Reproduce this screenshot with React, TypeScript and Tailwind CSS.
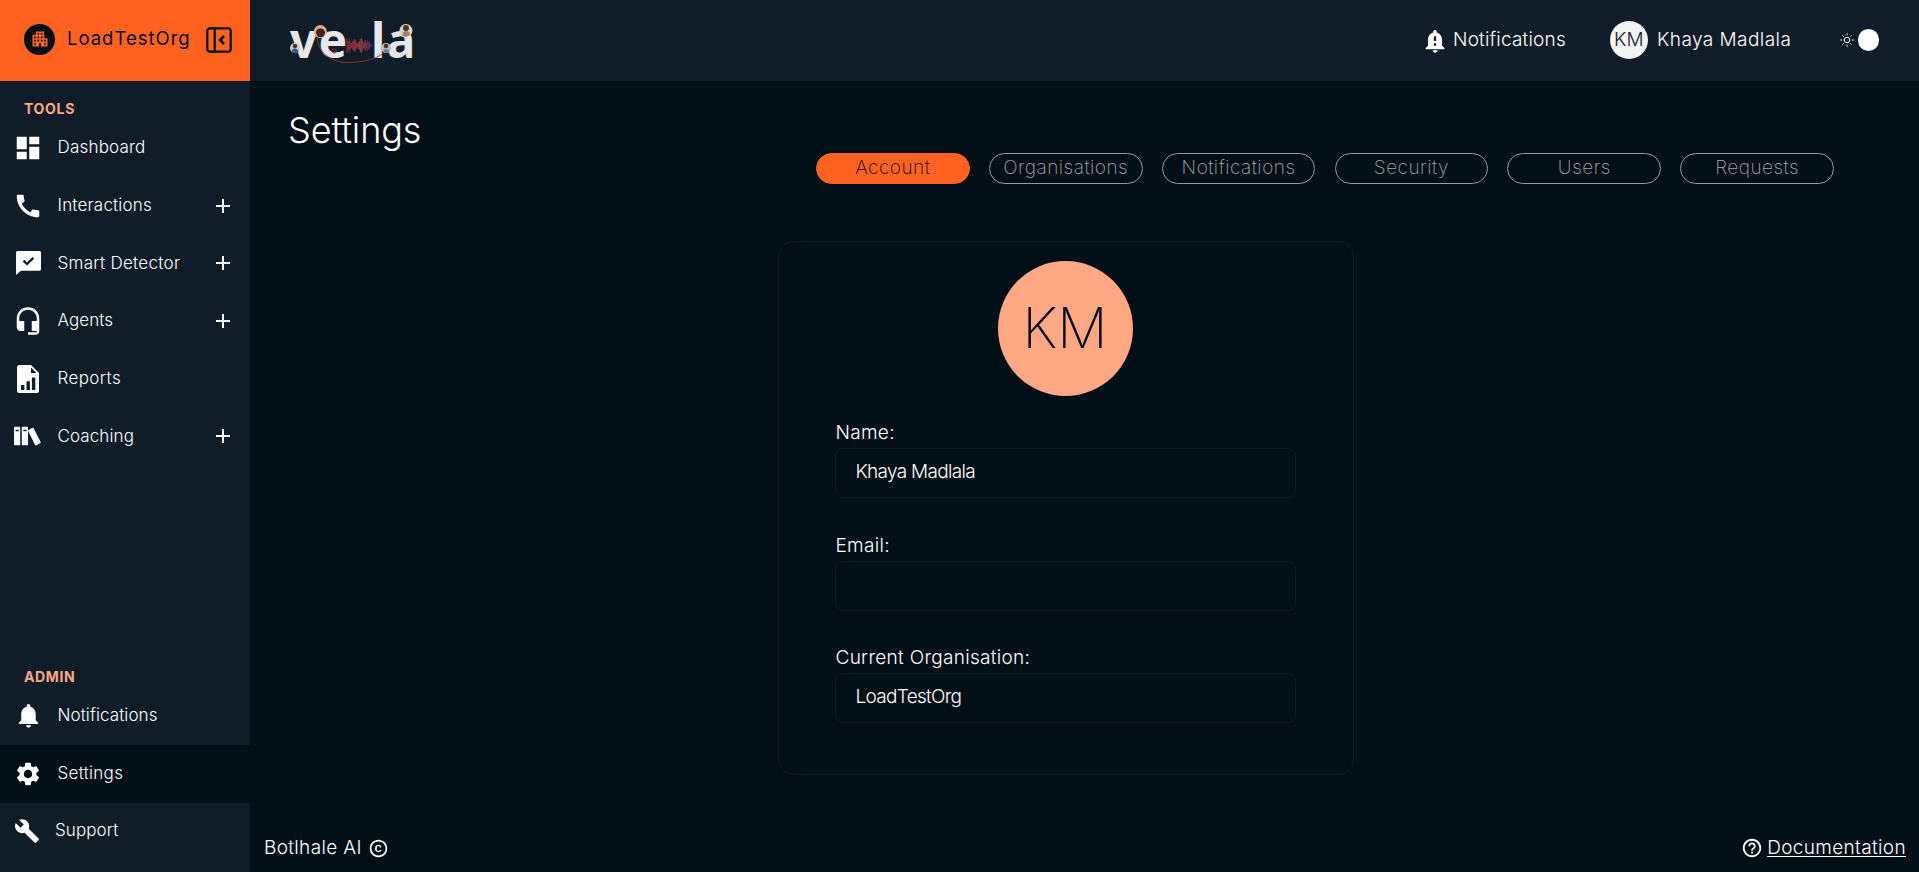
import type { ReactNode } from "react";
import {
  MdAdd,
  MdApartment,
  MdBuild,
  MdCall,
  MdCopyright,
  MdDashboard,
  MdHeadsetMic,
  MdHelpOutline,
  MdNotificationImportant,
  MdNotifications,
  MdSettings,
} from "react-icons/md";
import { ImBooks } from "react-icons/im";

function ChatCheckIcon() {
  return (
    <svg width="25" height="24" viewBox="0 0 25 24" fill="none">
      <path d="M1.5 0H23.5Q25 0 25 1.5V18Q25 19.7 23.5 19.7H5L0 24V1.5Q0 0 1.5 0Z" fill="#fff" />
      <path d="M7.6 9.6L11 13L17.4 6.8" stroke="#101d29" strokeWidth="2.3" />
    </svg>
  );
}

function ReportIcon() {
  return (
    <svg width="22" height="28" viewBox="0 0 22 28">
      <path d="M2.5 0H14L22 8V25.5Q22 28 19.5 28H2.5Q0 28 0 25.5V2.5Q0 0 2.5 0Z" fill="#fff" />
      <path d="M14 2.6V8H19.4Z" fill="#101d29" />
      <path d="M4 20H7.4V25H4ZM9.5 16.3H12.9V25H9.5ZM14.9 12.5H18.3V25H14.9Z" fill="#101d29" />
    </svg>
  );
}

function CollapseIcon() {
  return (
    <svg width="26" height="26" viewBox="0 0 26 26" fill="none" stroke="#020f17" strokeWidth="2.2">
      <rect x="1.3" y="1.3" width="23.4" height="23.4" rx="2.5" />
      <path d="M8.7 1V25" />
      <path d="M18 9L14.2 13L18 17" strokeWidth="2.6" />
    </svg>
  );
}

function SunIcon() {
  return (
    <svg width="14" height="14" viewBox="0 0 14 14" fill="none" stroke="#fff" strokeWidth="1">
      <circle cx="7" cy="7" r="2.8" />
      <path d="M7 0.4V2.2M7 11.8V13.6M0.4 7H2.2M11.8 7H13.6M2.4 2.4L3.5 3.5M10.5 10.5L11.6 11.6M2.4 11.6L3.5 10.5M10.5 3.5L11.6 2.4" />
    </svg>
  );
}

const wave = [15, 9, 14, 8, 5, 9, 13, 10, 6, 3, 8, 13, 15, 9, 5, 11, 6, 10, 7, 4, 2];

function Logo() {
  return (
    <svg width="140" height="80" viewBox="0 -14 140 80">
      <defs>
        <linearGradient id="wave" x1="0" x2="1">
          <stop offset="0" stopColor="#6b2434" />
          <stop offset="0.5" stopColor="#8f3a3c" />
          <stop offset="1" stopColor="#4a2060" />
        </linearGradient>
      </defs>
      <g fontFamily="'Noto Sans','Open Sans',sans-serif" fontWeight="700" fontSize="48" fill="#e6e7ea">
        <text x="5" y="43">v</text>
        <text x="33.5" y="43">e</text>
        <text x="86" y="43">l</text>
        <text x="101.5" y="43">a</text>
      </g>
      <g fill="url(#wave)">
        <path d={wave.map((h, i) => `M${61 + i * 1.25} ${30.5 - h / 2}h1.3v${h}h-1.3z`).join("")} />
      </g>
      <path d="M32 20C32 35 43 47 62 47.5C80 47.5 96 43 101 35" fill="none" stroke="#8c3b26" strokeWidth="0.9" />
      <circle cx="49" cy="36" r="2.2" fill="none" stroke="#9c3b2b" strokeWidth="0.8" />
      <circle cx="35.3" cy="16.5" r="6.5" fill="#e3ab8d" />
      <path d="M31 18Q31 13.5 35 13.5Q40 13.5 40 18L38 22H33Z" fill="#3a2520" />
      <circle cx="10" cy="33" r="5" fill="#c9c9cc" />
      <circle cx="10" cy="31" r="2.2" fill="#49362f" />
      <path d="M6.5 37Q7 33.5 10 33.5Q13 33.5 13.5 37Q10 39.5 6.5 37Z" fill="#3c5480" />
      <circle cx="121" cy="15.5" r="6.5" fill="#d8d3ca" />
      <circle cx="121" cy="13" r="3" fill="#4b352b" />
      <path d="M117 20Q118 16 121 16Q125 16 125 20Q121 23 117 20Z" fill="#a98063" />
      <circle cx="101" cy="33" r="5" fill="#b9c0bd" />
      <circle cx="101" cy="31" r="2.3" fill="#46342d" />
      <path d="M98 37Q98.5 34 101 34Q104 34 104.5 37Q101 39 98 37Z" fill="#6b8a83" />
    </svg>
  );
}

type Item = { label: string; icon: ReactNode; plus?: boolean; active?: boolean; text: string };

const tools: Item[] = [
  { label: "Dashboard", icon: <MdDashboard size={30} />, text: "tracking-[0.2px]" },
  { label: "Interactions", icon: <MdCall size={30} />, plus: true, text: "tracking-[0.2px]" },
  { label: "Smart Detector", icon: <ChatCheckIcon />, plus: true, text: "tracking-[0.3px]" },
  { label: "Agents", icon: <MdHeadsetMic size={30} />, plus: true, text: "tracking-[0.1px]" },
  { label: "Reports", icon: <ReportIcon />, text: "tracking-[0.4px]" },
  { label: "Coaching", icon: <ImBooks size={28} />, plus: true, text: "tracking-[0.1px]" },
];

const admin: Item[] = [
  { label: "Notifications", icon: <MdNotifications size={29} />, text: "tracking-[0.1px]" },
  { label: "Settings", icon: <MdSettings size={28} />, active: true, text: "tracking-[0.3px]" },
];

function NavRow({ item }: { item: Item }) {
  return (
    <div className={`flex h-[57.7px] items-center ${item.active ? "bg-[#020f17]" : ""}`}>
      <span className="flex w-14 justify-center">{item.icon}</span>
      <span className={`pb-px pl-[1.5px] text-[17px] leading-6 ${item.text}`}>{item.label}</span>
      {item.plus && <MdAdd size={24} className="mr-[15px] ml-auto" />}
    </div>
  );
}

function Field({ label, value }: { label: string; value: string }) {
  return (
    <div className="flex flex-col">
      <span className="pl-px text-[19px] leading-[30px] tracking-[0.3px]">{label}</span>
      <div className="flex h-[50px] items-center rounded-lg border border-[#0e1b27] px-5 pb-0.5 text-[19px] tracking-[-0.7px]">
        {value}
      </div>
    </div>
  );
}

const tabs = ["Account", "Organisations", "Notifications", "Security", "Users", "Requests"];

export default function App() {
  return (
    <div className="flex h-[872px] w-full overflow-hidden bg-[#020f17] font-['Inter','Liberation_Sans',sans-serif] font-light text-white">
      <aside className="flex w-[250px] shrink-0 flex-col bg-[#101d29]">
        <div className="flex h-[81px] items-center bg-[#ff6120] pl-6 text-[#020f17]">
          <span className="mb-[3px] flex size-[31px] items-center justify-center rounded-full bg-[#020f17] text-[#ff6120]">
            <MdApartment size={20} />
          </span>
          <span className="mb-1 ml-3 w-[127px] text-[18.5px] font-normal tracking-[1px]">LoadTestOrg</span>
          <span className="mb-[1px] ml-3">
            <CollapseIcon />
          </span>
        </div>
        <div className="pt-[18px] pl-6 text-sm leading-5 font-bold tracking-[0.7px] text-[#ffa883]">TOOLS</div>
        <nav className="flex flex-col">
          {tools.map((t) => (
            <NavRow key={t.label} item={t} />
          ))}
        </nav>
        <div className="mt-[202px] pl-6 text-sm leading-5 font-bold tracking-[0.6px] text-[#ffa883]">ADMIN</div>
        <nav className="flex flex-col">
          {admin.map((t) => (
            <NavRow key={t.label} item={t} />
          ))}
          <div className="flex h-14 items-center pl-[14px]">
            <MdBuild size={26} />
            <span className="pl-[15px] text-[17px] tracking-[0.1px]">Support</span>
          </div>
        </nav>
      </aside>
      <div className="flex min-w-0 grow flex-col">
        <header className="flex h-[81px] shrink-0 items-center bg-[#101d29] pl-[35px]">
          <Logo />
          <div className="ml-auto flex items-center text-[19px] tracking-[0.2px] whitespace-nowrap">
            <MdNotificationImportant size={28} />
            <span className="ml-1 w-[113px]">Notifications</span>
            <span className="mb-px ml-11 flex size-[38px] items-center justify-center rounded-full bg-[#f4f4f4] text-[19px] text-[#101d29]">
              KM
            </span>
            <span className="ml-[9px] w-[133px] tracking-[0.45px]">Khaya Madlala</span>
          </div>
          <div className="mr-10 mb-px ml-[50px] flex items-center gap-1">
            <SunIcon />
            <span className="h-[22px] w-[21px] rounded-full bg-white" />
          </div>
        </header>
        <main className="flex grow flex-col">
          <h1 className="pt-[27px] pl-[38px] text-[36px] leading-[45px] tracking-[-0.1px]">Settings</h1>
          <div className="mr-[85px] ml-auto grid w-[1018px] grid-cols-6 gap-[19.2px] text-[19px] tracking-[0.5px]">
            {tabs.map((t, i) => (
              <div
                key={t}
                className={`flex h-[31px] items-center justify-center rounded-2xl border pb-px font-extralight ${i === 0 ? "border-[#ff6120] bg-[#ff6120] text-[#020f17]" : "border-[#989ca0] text-[#a2a6aa]"}`}
              >
                {t}
              </div>
            ))}
          </div>
          <section className="mt-[57px] ml-[528px] flex h-[534px] w-[576px] flex-col items-center rounded-2xl border border-[#0d1a24] pt-[19px]">
            <div className="mr-0.5 flex size-[135px] items-center justify-center rounded-full bg-[#ffa883] pb-px text-[56px] font-extralight text-[#020f17]">
              KM
            </div>
            <div className="mr-0.5 flex w-[461px] flex-col gap-[32.5px] pt-[22px]">
              <Field label="Name:" value="Khaya Madlala" />
              <Field label="Email:" value="" />
              <Field label="Current Organisation:" value="LoadTestOrg" />
            </div>
          </section>
          <footer className="mt-auto flex items-center justify-between pr-[13px] pb-2 pl-[14px] text-[19px] leading-8 tracking-[0.35px]">
            <span className="flex items-center gap-1.5">
              Botlhale AI <MdCopyright size={21} />
            </span>
            <span className="flex items-center gap-1">
              <MdHelpOutline size={22} />
              <span className="underline underline-offset-2">Documentation</span>
            </span>
          </footer>
        </main>
      </div>
    </div>
  );
}
